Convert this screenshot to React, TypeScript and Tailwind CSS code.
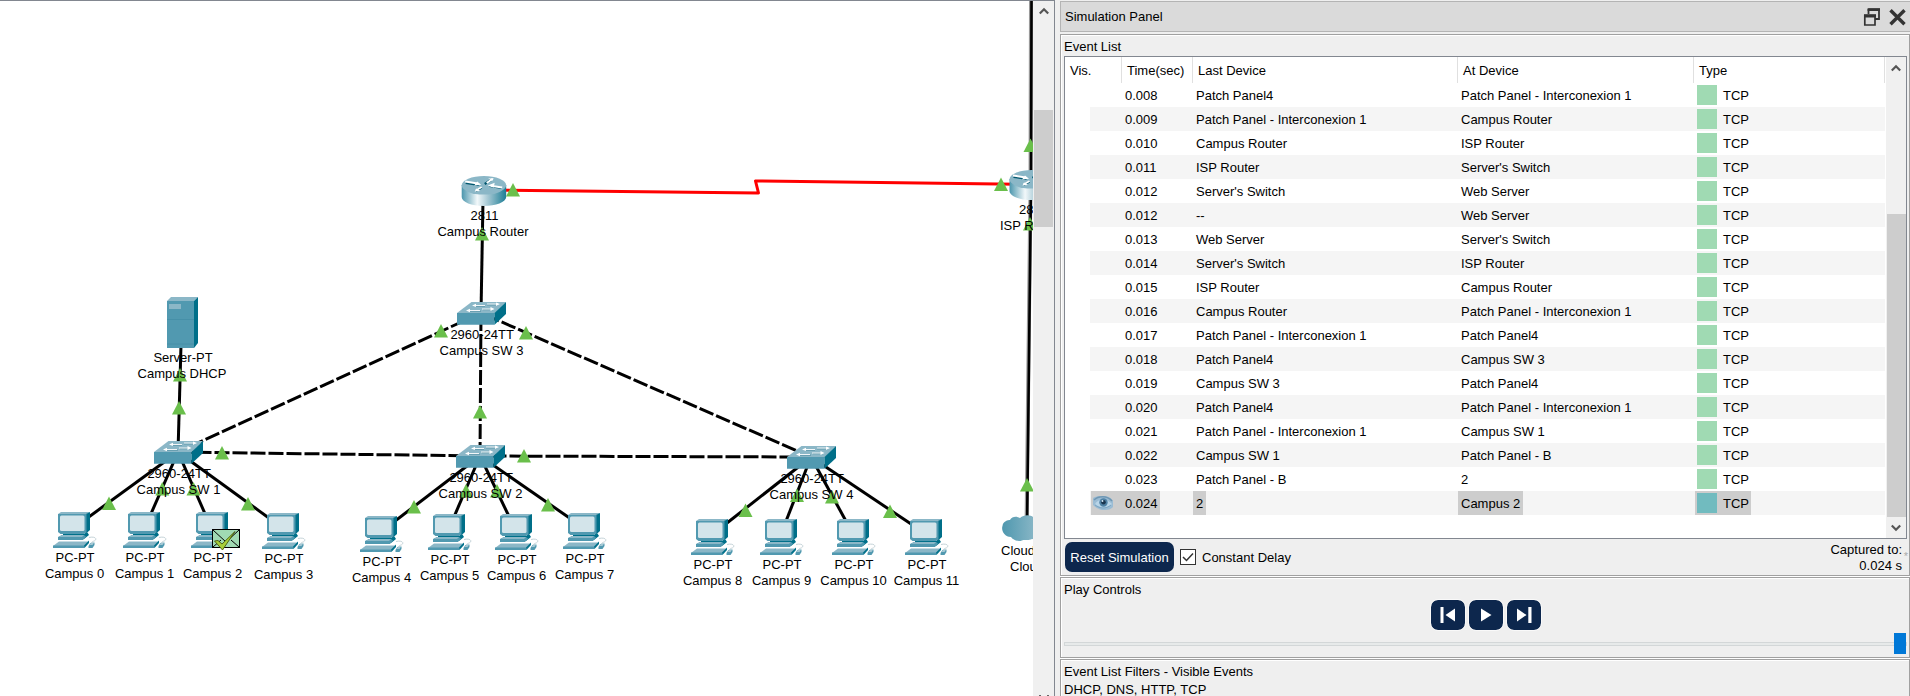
import React from "react";

type Point = [number, number];

const LINKS: [number, number, number, number][] = [
  [483, 200, 481, 313],
  [181, 345, 178, 452],
  [178, 452, 75, 527],
  [178, 452, 143, 532],
  [178, 452, 213, 532],
  [178, 452, 284, 529],
  [480, 456, 382, 531],
  [480, 456, 448, 531],
  [480, 456, 516, 531],
  [480, 456, 584, 528],
  [811, 457, 713, 534],
  [811, 457, 781, 534],
  [811, 457, 853, 534],
  [811, 457, 926, 534],
];

const TRUNKS: [number, number, number, number, number][] = [
  [481, 313, 178, 452, 0],
  [481, 313, 480, 456, -3],
  [481, 313, 811, 457, -4.5],
  [178, 452, 480, 456, -0.5],
  [480, 456, 811, 457, 6.5],
];

const STATUS: Point[] = [
  [513, 183], [482, 227], [441, 324], [526, 326], [480, 405], [180, 368], [179, 401],
  [222, 446], [162.3, 482], [193.5, 482], [248, 497], [109, 496.5], [524, 449],
  [414, 500], [466, 484], [497, 484], [548, 498], [745.5, 503.5], [797, 488.5],
  [832, 490], [890, 504.5], [1001, 177.5], [1030.5, 138.5], [1030, 217], [1027, 478],
];

const SWITCHES: { x: number; y: number; name: string; cx: number }[] = [
  { x: 154, y: 441, name: "Campus SW 1", cx: 178.5 },
  { x: 457, y: 302, name: "Campus SW 3", cx: 481.5 },
  { x: 456, y: 445, name: "Campus SW 2", cx: 480.5 },
  { x: 787, y: 446, name: "Campus SW 4", cx: 811.5 },
];

const PCS: { x: number; y: number; name: string }[] = [
  { x: 53, y: 512, name: "Campus 0" },
  { x: 123, y: 512, name: "Campus 1" },
  { x: 191, y: 512, name: "Campus 2" },
  { x: 262, y: 513, name: "Campus 3" },
  { x: 360, y: 516, name: "Campus 4" },
  { x: 428, y: 514, name: "Campus 5" },
  { x: 495, y: 514, name: "Campus 6" },
  { x: 563, y: 513, name: "Campus 7" },
  { x: 691, y: 519, name: "Campus 8" },
  { x: 760, y: 519, name: "Campus 9" },
  { x: 832, y: 519, name: "Campus 10" },
  { x: 905, y: 519, name: "Campus 11" },
];

const EVENTS: [string, string, string][] = [
  ["0.008", "Patch Panel4", "Patch Panel - Interconexion 1"],
  ["0.009", "Patch Panel - Interconexion 1", "Campus Router"],
  ["0.010", "Campus Router", "ISP Router"],
  ["0.011", "ISP Router", "Server's Switch"],
  ["0.012", "Server's Switch", "Web Server"],
  ["0.012", "--", "Web Server"],
  ["0.013", "Web Server", "Server's Switch"],
  ["0.014", "Server's Switch", "ISP Router"],
  ["0.015", "ISP Router", "Campus Router"],
  ["0.016", "Campus Router", "Patch Panel - Interconexion 1"],
  ["0.017", "Patch Panel - Interconexion 1", "Patch Panel4"],
  ["0.018", "Patch Panel4", "Campus SW 3"],
  ["0.019", "Campus SW 3", "Patch Panel4"],
  ["0.020", "Patch Panel4", "Patch Panel - Interconexion 1"],
  ["0.021", "Patch Panel - Interconexion 1", "Campus SW 1"],
  ["0.022", "Campus SW 1", "Patch Panel - B"],
  ["0.023", "Patch Panel - B", "2"],
  ["0.024", "2", "Campus 2"],
];

function Router({ x, y }: { x: number; y: number }) {
  return (
    <g transform={`translate(${x} ${y})`}>
      <path d="M0 9V21C0 26 10 30 22 30S44.500 26 44.500 21V9Z" fill="url(#routerBody)" />
      <ellipse cx="22.250" cy="9.300" rx="22.250" ry="9.300" fill="#8bb7c7" />
      <g fill="none" stroke="#00566e" strokeWidth="2.200">
        <path d="M4 6.800L17 8.800M23 8L30 3.500M40 12L28 10M14 15L20 11.500" />
      </g>
      <g fill="none" stroke="#fff" strokeWidth="2">
        <path d="M3.500 5.500L16 7.600M25 7L31 2.800M40.500 11.500L29 9.800M14 14.500L20 11" />
      </g>
      <path d="M12.500 9.500L19.500 8.800L15.500 5.500ZM26.500 2.500L32 2.300L30.500 5ZM26 9.500L33 6.800L32 11.600ZM13 15.500L18.500 15L14.500 12.500Z" fill="#fff" />
    </g>
  );
}

function Switch({ x, y }: { x: number; y: number }) {
  return (
    <g transform={`translate(${x} ${y})`}>
      <path d="M0 11L14.500 0H49L37.500 11.500Z" fill="#8bb7c7" />
      <path d="M0 11H37.500V22.700H0Z" fill="#5199b0" />
      <path d="M37.500 11L49 0V12L37.500 22.700Z" fill="#006f89" />
      <path d="M18 4.200H28M30 2.900H41M12 9.200H24M26 7.700H36" stroke="#00566e" strokeWidth="1" opacity="0.350" />
      <path d="M17 3.500H28M30 2H41M11 8.500H23M25 7H35" stroke="#fff" strokeWidth="1" opacity="0.900" />
      <path d="M15 3.500L19 1.800V5ZM43 2L39 0.500V4ZM9 8.500L13 6.800V10.200ZM37.500 7L33.500 5V9Z" fill="#fff" />
    </g>
  );
}

function Pc({ x, y }: { x: number; y: number }) {
  return (
    <g transform={`translate(${x} ${y})`}>
      <path d="M5 2L8 0H37L34 2Z" fill="#8bb7c7" />
      <path d="M33 2L37 0V18L32 22.500Z" fill="#006f89" />
      <path d="M5 2H33.500V20.500L31 22H7.500L5 20Z" fill="#5199b0" />
      <rect x="7" y="3.500" width="24.500" height="15.500" rx="1.500" fill="#d3e4ea" />
      <path d="M10 22H31L34.500 20.500L36 23L31 27H5L10 23Z" fill="#00708a" />
      <path d="M5 25L9 23H31L33 24.500L30 28H5Z" fill="#5199b0" />
      <path d="M9 23H31L29 25H6Z" fill="#8bb7c7" />
      <path d="M0 34L6 29.500H36L31 34Z" fill="#8bb7c7" />
      <path d="M0 33.500H31.500V36H0Z" fill="#5199b0" />
      <path d="M31 33.500L36 28.500V31L31.500 36Z" fill="#00708a" />
      <path d="M36 25.500C40 24.500 44 25.500 42.500 28C41.500 29.500 39 29 38.500 31" fill="none" stroke="#c5d3d8" strokeWidth="1" />
      <path d="M35.500 34L37.500 31L41.500 30.500V33L39.500 36H35.500Z" fill="#5199b0" />
      <path d="M36.500 33L38 31L41 30.800L39.500 33Z" fill="#a5c8d4" />
    </g>
  );
}

function Label({ x, y, children }: { x: number; y: number; children: React.ReactNode }) {
  return (
    <text x={x} y={y} textAnchor="middle">
      {children}
    </text>
  );
}

function Topology() {
  return (
    <svg width="1033" height="695" viewBox="0 1 1033 695" className="block shrink-0 bg-white text-[13px]">
      <defs>
        <linearGradient id="routerBody" x1="0" x2="1" y1="0" y2="0">
          <stop offset="0" stopColor="#4b96ad" />
          <stop offset="0.350" stopColor="#f2f8fa" />
          <stop offset="0.600" stopColor="#a2c6d2" />
          <stop offset="1" stopColor="#1c7d95" />
        </linearGradient>
        <linearGradient id="cloudFill" x1="0" x2="1" y1="0" y2="0">
          <stop offset="0" stopColor="#4f98af" />
          <stop offset="0.600" stopColor="#86b5c5" />
          <stop offset="1" stopColor="#4f98af" />
        </linearGradient>
      </defs>

      <g stroke="#000" strokeWidth="3" fill="none">
        {LINKS.map(([x1, y1, x2, y2], i) => (
          <line key={i} x1={x1} y1={y1} x2={x2} y2={y2} />
        ))}
        <g strokeDasharray="15 3">
          {TRUNKS.map(([x1, y1, x2, y2, offset], i) => (
            <line key={i} x1={x1} y1={y1} x2={x2} y2={y2} strokeDashoffset={offset} />
          ))}
        </g>
        <path d="M1031 0L1030.500 185L1026.500 530" stroke="#999" strokeWidth="4" />
        <path d="M1031.500 0L1031 185L1027 530" strokeWidth="2.600" />
        <path d="M484 190L758.500 193L755.500 181L1030 184.500" stroke="#f00" strokeWidth="3" strokeLinejoin="round" />
      </g>

      <Router x={461.7} y={176} />
      <Router x={1009.5} y={170} />
      {SWITCHES.map((s) => (
        <Switch key={s.name} x={s.x} y={s.y} />
      ))}
      <path d="M167 301L171 297H198L194 301Z" fill="#8bb7c7" />
      <path d="M194 301L198 297V343L194 348Z" fill="#006f89" />
      <path d="M167 301H194V348H167Z" fill="#5199b0" />
      <path d="M169 304H181V309H169Z" fill="#8bb7c7" />
      <path d="M167 319.500H194M167 344H194" stroke="#448ea6" strokeWidth="0.800" />
      {PCS.map((p) => (
        <Pc key={p.name} x={p.x} y={p.y} />
      ))}
      <path
        d="M1011 537C1004 537 1001 530 1002.500 526C1003 521 1008 520 1010 520C1012 516 1017 516 1020 518C1024 514 1031 515 1033 517C1040 513 1046 517 1049 520C1057 521 1055 535 1048 537C1040 542 1034 539 1032 539C1028 541 1024 539 1022 540.500C1018 542 1013 540 1011 537Z"
        fill="url(#cloudFill)"
      />

      <g fill="#6abf4b">
        {STATUS.map(([x, y], i) => (
          <path key={i} d={`M${x} ${y}L${x + 7} ${y + 13.5}H${x - 7}Z`} />
        ))}
      </g>

      <g>
        <rect x="212.500" y="529.500" width="27" height="18" fill="#a0dab3" stroke="#000" />
        <path d="M213 530L226 542L239 530M213 547L221 540M239 547L231 540" fill="none" stroke="#000" />
        <path d="M214.500 541L218 540.500L222 544L235 531.500L222.500 550Z" fill="#a6ce39" stroke="#3c4a00" strokeWidth="0.800" />
      </g>

      <g fill="#000">
        <Label x={484.5} y={220}>2811</Label>
        <Label x={483} y={236}>Campus Router</Label>
        <Label x={183} y={362}>Server-PT</Label>
        <Label x={182} y={378}>Campus DHCP</Label>
        {SWITCHES.map((s) => (
          <React.Fragment key={s.name}>
            <Label x={s.cx + 0.7} y={s.y + 37}>2960-24TT</Label>
            <Label x={s.cx} y={s.y + 53}>{s.name}</Label>
          </React.Fragment>
        ))}
        {PCS.map((p) => (
          <React.Fragment key={p.name}>
            <Label x={p.x + 22} y={p.y + 50}>PC-PT</Label>
            <Label x={p.x + 21.5} y={p.y + 66}>{p.name}</Label>
          </React.Fragment>
        ))}
        <text x="1019" y="214">2811</text>
        <text x="1000" y="230">ISP Router</text>
        <text x="1001" y="555">Cloud-PT</text>
        <text x="1010" y="571">Cloud</text>
      </g>
    </svg>
  );
}

function Chevron({ down = false }: { down?: boolean }) {
  return (
    <svg width="10" height="8" viewBox="0 0 10 8" className="block shrink-0">
      <path d={down ? "M0.800 1.500L5 5.700L9.200 1.500" : "M0.800 6.500L5 2.300L9.200 6.500"} fill="none" stroke="#555" strokeWidth="2.200" />
    </svg>
  );
}

function Eye() {
  return (
    <svg width="20" height="14" viewBox="0 0 20 14" className="block">
      <path d="M0 2C4 0 6 0 11 0C16 0 19 3 20 5V11C17 14 14 14 9 14C5 13 2 11 0 9Z" fill="#9bbcd4" />
      <path d="M1 4C5 0 14 -1 19 5" fill="none" stroke="#6f97b3" strokeWidth="1.500" />
      <path d="M2 8C5 3 13 2 19 8C14 13 7 12 2 8Z" fill="#b9d5e8" />
      <circle cx="10.500" cy="6.500" r="4.200" fill="#4f82a5" />
      <circle cx="10.500" cy="6.200" r="2.300" fill="#1b3750" />
      <circle cx="9.500" cy="5" r="0.900" fill="#d9edf9" />
      <path d="M2 9C7 13 13 13 18 9" fill="none" stroke="#7ba6c4" />
    </svg>
  );
}

function Row({ event, index }: { event: [string, string, string]; index: number }) {
  const selected = index === EVENTS.length - 1;
  const mark = selected ? "bg-[#cdcdcd]" : "";
  return (
    <div className={`ml-[25px] flex h-6 items-center leading-[25px] ${index % 2 ? "bg-[#f5f5f5]" : ""}`}>
      <div className="w-[103px] shrink-0 pl-px">
        <div className={`flex h-6 w-[69px] items-center ${mark}`}>
          <span className="w-[34px] shrink-0 pl-0.5">{selected && <Eye />}</span>
          <span className="h-6 leading-[26px]">{event[0]}</span>
        </div>
      </div>
      <div className="h-6 w-[265px] shrink-0">
        <span className={`block h-6 w-fit px-[3px] leading-[26px] ${mark}`}>{event[1]}</span>
      </div>
      <div className="h-6 w-[237px] shrink-0">
        <span className={`block h-6 w-fit px-[3px] leading-[26px] ${mark}`}>{event[2]}</span>
      </div>
      <div className={`flex h-6 w-14 items-center gap-1.5 pl-0.5 ${mark}`}>
        <span className={`size-5 shrink-0 ${selected ? "bg-[#71bbbf]" : "bg-[#a0dab3]"}`} />
        <span className="h-6 leading-[26px]">TCP</span>
      </div>
    </div>
  );
}

function PlayButton({ children }: { children: React.ReactNode }) {
  return (
    <button className="flex h-[30px] w-[34px] items-center justify-center rounded-[7px] bg-[#0d274d] outline outline-1 outline-white/60">
      <svg width="18" height="20" viewBox="0 0 18 20" fill="#fff">
        {children}
      </svg>
    </button>
  );
}

const GROUP = "flex flex-col border border-[#a0a0a0] shadow-[inset_1px_1px_0_#fff,0_1px_0_#fff]";

export default function App() {
  return (
    <div className="flex h-[696px] w-[1910px] overflow-hidden bg-[#efefef] font-['Liberation_Sans',Arial,sans-serif] text-[13px] text-black">
      <div className="flex h-[696px] w-[1055px] shrink-0 border-t border-r border-[#828790]">
        <Topology />
        <div className="flex flex-1 flex-col items-center bg-[#f0f0f0]">
          <div className="flex h-[109px] w-full items-start justify-center pt-1.5">
            <Chevron />
          </div>
          <div className="h-[117px] w-[19px] bg-[#cdcdcd]" />
          <div className="mt-auto flex h-px w-2.5 justify-between">
            <span className="h-px w-0.5 bg-[#666]" />
            <span className="h-px w-0.5 bg-[#666]" />
          </div>
        </div>
      </div>

      <div className="ml-[5px] flex w-[850px] shrink-0 flex-col pt-px">
        <div className="flex h-[31px] shrink-0 items-center border-y border-l border-[#b4b4b4] bg-[#dadada] pl-1">
          <span className="flex-1 pt-px">Simulation Panel</span>
          <svg width="18" height="20" viewBox="0 0 18 20" className="mr-2">
            <path d="M5.500 2.500H16V12H12M5.500 2V7" fill="none" stroke="#333" strokeWidth="1.800" />
            <path d="M4.600 1.300H17V4H4.600ZM1 7.300H13V10.500H1Z" fill="#333" />
            <path d="M1.800 8.500H12V18H1.800Z" fill="none" stroke="#333" strokeWidth="1.700" />
          </svg>
          <svg width="17" height="18" viewBox="0 0 17 18" className="mr-1">
            <path d="M1.500 2.300L15.500 16.300M15.500 2.300L1.500 16.300" stroke="#333" strokeWidth="3.400" />
          </svg>
        </div>

        <section className={`${GROUP} mt-0.5 h-[542px] shrink-0`}>
          <div className="h-[21px] pl-[3px] leading-[23px]">Event List</div>
          <div className="mr-0.5 ml-[3px] flex h-[483px] shrink-0 border border-[#828790] bg-white">
            <div className="flex-1">
              <div className="flex h-[26px] w-[820px] leading-[27px]">
                <div className="w-[57px] border-r border-[#e0e0e0] pl-[5px]">Vis.</div>
                <div className="w-[71px] border-r border-[#e0e0e0] pl-[5px]">Time(sec)</div>
                <div className="w-[265px] border-r border-[#e0e0e0] pl-[5px]">Last Device</div>
                <div className="w-[236px] border-r border-[#e0e0e0] pl-[5px]">At Device</div>
                <div className="w-[191px] border-r border-[#e0e0e0] pl-[5px]">Type</div>
              </div>
              <div className="w-[820px]">
                {EVENTS.map((e, i) => (
                  <Row key={i} event={e} index={i} />
                ))}
              </div>
            </div>
            <div className="flex w-5 shrink-0 flex-col items-center bg-[#f0f0f0]">
              <div className="flex h-[157px] items-start pt-[7px]">
                <Chevron />
              </div>
              <div className="h-[303px] w-[19px] bg-[#cdcdcd]" />
              <div className="flex flex-1 items-center">
                <Chevron down />
              </div>
            </div>
          </div>
          <div className="flex flex-1 items-center pl-1">
            <button className="h-[30px] w-[109px] rounded-[7px] bg-[#0d274d] pt-px text-white">Reset Simulation</button>
            <span className="ml-1.5 flex size-4 items-center justify-center border border-[#333] bg-white">
              <svg width="14" height="14" viewBox="0 0 14 14">
                <path d="M2 7L5.500 10.500L12 3.500" fill="none" stroke="#333" strokeWidth="1.500" />
              </svg>
            </span>
            <span className="ml-1.5 pt-px">Constant Delay</span>
            <div className="ml-auto flex pt-0.5 pr-px text-right leading-4">
              <div>
                Captured to:
                <br />
                0.024 s
              </div>
              <span className="w-1.5 pt-1.5 text-[11px] text-[#aaa]">*</span>
            </div>
          </div>
        </section>

        <section className={`${GROUP} mt-px h-[81px] shrink-0`}>
          <div className="h-[22px] pl-[3px] leading-[23px]">Play Controls</div>
          <div className="flex h-[30px] justify-center gap-1 pl-0.5">
            <PlayButton>
              <path d="M1.500 2H4.500V18H1.500ZM6.500 10L16 3.500V16.500Z" />
            </PlayButton>
            <PlayButton>
              <path d="M4 3.500L14.500 10L4 16.500Z" />
            </PlayButton>
            <PlayButton>
              <path d="M2 3.500L11.500 10L2 16.500ZM13.300 2H16.500V18H13.300Z" />
            </PlayButton>
          </div>
          <div className="mt-[3px] mr-0.5 ml-[3px] flex h-[21px] items-center">
            <div className="h-1 flex-1 border border-r-0 border-[#d3d7d8] bg-[#e7eaea]" />
            <div className="h-[21px] w-3 bg-[#0078d7]" />
            <div className="h-1 w-px bg-[#d3d7d8]" />
          </div>
        </section>

        <section className={`${GROUP} mt-px h-[60px] shrink-0 pt-[3px] pl-[3px] leading-[18px]`}>
          <div>Event List Filters - Visible Events</div>
          <div>DHCP, DNS, HTTP, TCP</div>
        </section>
      </div>
    </div>
  );
}
